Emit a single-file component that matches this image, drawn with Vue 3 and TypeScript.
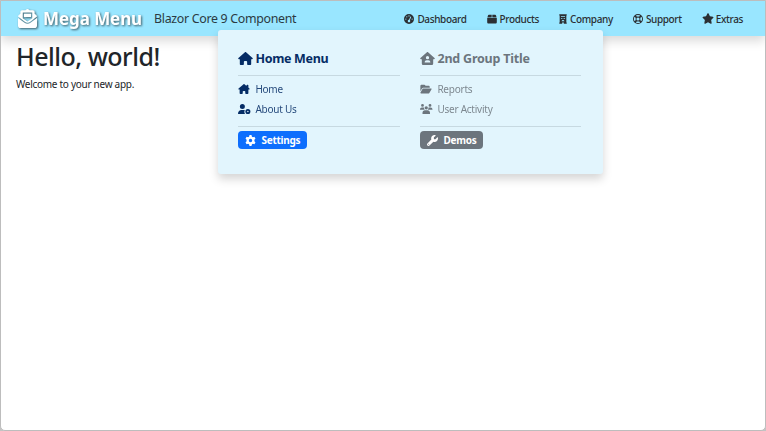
<script setup lang="ts">
interface Icon {
  box: string
  path: string
}
interface NavItem {
  label: string
  icon: string
}
interface Group {
  title: string
  titleIcon: string
  links: NavItem[]
  action: NavItem
  tone: string
}

const icons: Record<string, Icon> = {
  house: {
    box: '0 0 576 512',
    path: 'M575.8 255.5c0 18-15 32.1-32 32.1h-32l.7 160.2c0 2.7-.2 5.4-.5 8.1V472c0 22.1-17.9 40-40 40H392c-22.1 0-40-17.9-40-40V384c0-17.7-14.3-32-32-32H256c-17.7 0-32 14.3-32 32v88c0 22.1-17.9 40-40 40H104c-22.1 0-40-17.9-40-40V287.6H32c-18 0-32-14-32-32.1c0-9 3-17 10-24L266.4 8c7-7 15-8 22-8s15 2 21 7L564.8 231.5c8 7 12 15 11 24z',
  },
  chimney: {
    box: '0 0 576 512',
    path: 'M543.8 287.6c17 0 32-14 32-32.1c1-9-3-17-11-24L512 185V64c0-17.7-14.3-32-32-32H448c-17.7 0-32 14.3-32 32v36.7L309.5 7c-6-5-14-7-21-7s-15 1-22 8L10 231.5c-7 7-10 15-10 24c0 18 14 32.1 32 32.1h32v184.4c0 22.1 17.9 40 40 40h80c22.1 0 40-17.9 40-40V384c0-17.7 14.3-32 32-32h64c17.7 0 32 14.3 32 32v88c0 22.1 17.9 40 40 40h80c22.1 0 40-17.9 40-40V287.6z',
  },
  houseUser: {
    box: '0 0 576 512',
    path: 'M575.8 255.5c0 18-15 32.1-32 32.1h-32v160.4c0 35.3-28.7 64-64 64H128c-35.3 0-64-28.7-64-64V287.6H32c-18 0-32-14-32-32.1c0-9 3-17 10-24L266.4 8c7-7 15-8 22-8s15 2 21 7L564.8 231.5c8 7 12 15 11 24zM352 224a64 64 0 1 0-128 0a64 64 0 1 0 128 0zM256 320c-44.2 0-80 35.8-80 80c0 8.8 7.2 16 16 16H384c8.8 0 16-7.2 16-16c0-44.2-35.8-80-80-80z',
  },
  gauge: {
    box: '0 0 512 512',
    path: 'M0 256a256 256 0 1 1 512 0A256 256 0 1 1 0 256zM288 96a32 32 0 1 0-64 0a32 32 0 1 0 64 0zM256 416c35.3 0 64-28.7 64-64c0-17.4-6.9-33.1-18.1-44.6L366 161.7c5.3-12.1-.2-26.3-12.3-31.6s-26.3 .2-31.6 12.3L257.9 288c-35.3 0-65.9 28.7-65.9 64s28.7 64 64 64zM176 144a32 32 0 1 0-64 0a32 32 0 1 0 64 0zM96 288a32 32 0 1 0 0-64a32 32 0 1 0 0 64zM448 256a32 32 0 1 0-64 0a32 32 0 1 0 64 0z',
  },
  box: {
    box: '0 0 512 512',
    path: 'M20 176L50 75c6-26 20-43 46-43h144v144zM272 32h144c26 0 40 17 46 43l30 101H272zM10 204h492v218c0 35-29 64-64 64H74c-35 0-64-29-64-64z',
  },
  building: {
    box: '40 0 432 512',
    path: 'M56 0h400v64h-20v384h20v64H300v-64h-88v64H56v-64h20V64H56zM144 88v44h224V88zM144 204v44h80v-44zM288 204v44h80v-44zM180 384h152c0-42-34-76-76-76s-76 34-76 76z',
  },
  ring: {
    box: '0 0 512 512',
    path: 'M256 0a256 256 0 1 1 0 512a256 256 0 1 1 0-512zM256 48c-41 0-79 12-112 33l62 62c32-15 68-15 100 0l62-62c-33-21-71-33-112-33zM81 144c-44 69-44 155 0 224l62-62c-15-32-15-68 0-100zM431 144l-62 62c15 32 15 68 0 100l62 62c44-69 44-155 0-224zM144 431c69 44 155 44 224 0l-62-62c-32 15-68 15-100 0zM256 176a80 80 0 1 0 0 160a80 80 0 1 0 0-160z',
  },
  star: {
    box: '0 0 576 512',
    path: 'M316.9 18C311.6 7 300.4 0 288.1 0s-23.4 7-28.8 18L195 150.3 51.4 171.5c-12 1.8-22 10.2-25.7 21.7s-.7 24.2 7.9 32.7L137.8 329 113.2 474.7c-2 12 3 24.2 12.9 31.3s23 8 33.8 2.3l128.3-68.5 128.3 68.5c10.8 5.7 23.9 4.9 33.8-2.3s14.9-19.3 12.9-31.3L438.5 329 542.7 225.9c8.6-8.5 11.7-21.2 7.9-32.7s-13.7-19.9-25.7-21.7L381.2 150.3z',
  },
  userGear: {
    box: '0 0 640 512',
    path: 'M224 0a128 128 0 1 1 0 256a128 128 0 1 1 0-256zM178 304h92c29 0 57 7 82 20c-37 55-36 130 8 188H30c-16 0-30-14-30-30c0-98 80-178 178-178zM506 252a130 130 0 1 1 0 260a130 130 0 1 1 0-260zM506 344a38 38 0 1 0 0 76a38 38 0 1 0 0-76z',
  },
  folder: {
    box: '0 0 576 512',
    path: 'M88.7 223.8L0 375.8V96C0 60.7 28.7 32 64 32H181.5c17 0 33.3 6.7 45.3 18.7l26.5 26.5c12 12 28.3 18.7 45.3 18.7H416c35.3 0 64 28.7 64 64v32H144c-22.8 0-43.8 12.1-55.3 31.8zm27.6 16.1C122.1 230 132.6 224 144 224H544c11.5 0 22 6.1 27.7 16.1s5.7 22.2-.1 32.1l-112 192C453.9 474 443.4 480 432 480H32c-11.5 0-22-6.1-27.7-16.1s-5.7-22.2 .1-32.1l112-192z',
  },
  users: {
    box: '0 0 640 512',
    path: 'M128 0a72 72 0 1 1 0 144a72 72 0 1 1 0-144zM512 0a72 72 0 1 1 0 144a72 72 0 1 1 0-144zM320 110a84 84 0 1 1 0 168a84 84 0 1 1 0-168zM96 174h66c18 0 34 4 48 12c-6 45 12 86 44 112H20c-12 0-20-9-20-20c0-57 43-104 96-104zM478 174h66c53 0 96 47 96 104c0 11-8 20-20 20H386c32-26 50-67 44-112c14-8 30-12 48-12zM250 320h140c68 0 122 60 122 134v58H128v-58c0-74 54-134 122-134z',
  },
  gear: {
    box: '0 0 512 512',
    path: 'M204 12c34-14 70-14 104 0l14 66c18 7 34 16 49 28l64-22c24 29 41 60 51 96l-50 44c3 21 3 43 0 64l50 44c-10 36-27 67-51 96l-64-22c-15 12-31 21-49 28l-14 66c-34 14-70 14-104 0l-14-66c-18-7-34-16-49-28l-64 22c-24-29-41-60-51-96l50-44c-3-21-3-43 0-64l-50-44c10-36 27-67 51-96l64 22c15-12 31-21 49-28zM256 176a80 80 0 1 0 0 160a80 80 0 1 0 0-160z',
  },
  wrench: {
    box: '0 0 512 512',
    path: 'M352 320c88.4 0 160-71.6 160-160c0-15.3-2.2-30.1-6.2-44.2c-3.1-10.8-16.4-13.2-24.3-5.3l-76.8 76.8c-3 3-7.1 4.7-11.3 4.7H336c-8.8 0-16-7.2-16-16V118.6c0-4.2 1.7-8.3 4.7-11.3l76.8-76.8c7.9-7.9 5.4-21.2-5.3-24.3C382.1 2.2 367.3 0 352 0C263.6 0 192 71.6 192 160c0 19.1 3.4 37.5 9.5 54.5L19.9 396.1C7.2 408.8 0 426.1 0 444.1C0 481.6 30.4 512 67.9 512c18 0 35.3-7.2 48-19.9L297.5 310.5c17 6.2 35.4 9.5 54.5 9.5zM80 408a24 24 0 1 1 0 48a24 24 0 1 1 0-48z',
  },
  mail: {
    box: '0 0 512 512',
    path: 'M216 20c24-27 56-27 80 0l16 12h88c26 0 48 22 48 48v48l42 32c14 11 22 26 22 43L318 347c-38 28-86 28-124 0L0 203c0-17 8-32 22-43l42-32V80c0-26 22-48 48-48h88zM128 96v154l104 76c14 10 34 10 48 0l104-76V96zM160 128h192v88H160zM0 243l176 130c48 36 112 36 160 0l176-130v205c0 35-29 64-64 64H64c-35 0-64-29-64-64z',
  },
}

const navItems: NavItem[] = [
  { label: 'Dashboard', icon: 'gauge' },
  { label: 'Products', icon: 'box' },
  { label: 'Company', icon: 'building' },
  { label: 'Support', icon: 'ring' },
  { label: 'Extras', icon: 'star' },
]

const groups: Group[] = [
  {
    title: 'Home Menu',
    titleIcon: 'house',
    links: [
      { label: 'Home', icon: 'chimney' },
      { label: 'About Us', icon: 'userGear' },
    ],
    action: { label: 'Settings', icon: 'gear' },
    tone: 'primary',
  },
  {
    title: '2nd Group Title',
    titleIcon: 'houseUser',
    links: [
      { label: 'Reports', icon: 'folder' },
      { label: 'User Activity', icon: 'users' },
    ],
    action: { label: 'Demos', icon: 'wrench' },
    tone: 'secondary',
  },
]
</script>

<template>
  <div class="window">
    <header class="navbar">
      <div class="brand">
        <svg class="brand-icon" :viewBox="icons.mail.box"><path fill-rule="evenodd" :d="icons.mail.path" /></svg>
        <span class="brand-name">Mega Menu</span>
      </div>
      <span class="subtitle">Blazor Core 9 Component</span>
      <nav class="nav">
        <a v-for="item in navItems" :key="item.label" :class="['nav-item', item.label.toLowerCase()]">
          <svg class="nav-icon" :viewBox="icons[item.icon].box"><path fill-rule="evenodd" :d="icons[item.icon].path" /></svg>
          <span>{{ item.label }}</span>
        </a>
      </nav>
      <div class="mega">
        <section v-for="group in groups" :key="group.title" :class="['group', group.tone]">
          <h2 class="group-title">
            <svg class="title-icon" :viewBox="icons[group.titleIcon].box"><path fill-rule="evenodd" :d="icons[group.titleIcon].path" /></svg>
            <span>{{ group.title }}</span>
          </h2>
          <ul class="links">
            <li v-for="link in group.links" :key="link.label" class="link">
              <span class="link-mark">
                <svg :class="['link-icon', link.icon]" :viewBox="icons[link.icon].box"><path fill-rule="evenodd" :d="icons[link.icon].path" /></svg>
              </span>
              <span class="link-label">{{ link.label }}</span>
            </li>
          </ul>
          <button class="action" type="button">
            <svg class="action-icon" :viewBox="icons[group.action.icon].box"><path fill-rule="evenodd" :d="icons[group.action.icon].path" /></svg>
            <span>{{ group.action.label }}</span>
          </button>
        </section>
      </div>
    </header>
    <main class="content">
      <h1>Hello, world!</h1>
      <p>Welcome to your new app.</p>
    </main>
  </div>
</template>

<style>
body {
  margin: 0;
  background: #c4c4c4;
}
</style>

<style scoped>
.window {
  box-sizing: border-box;
  width: 766px;
  height: 431px;
  overflow: hidden;
  border: 1px solid #bdbdbd;
  border-radius: 0 0 5px 5px;
  background: #fff;
  color: #212529;
  font-family: 'Noto Sans', 'Open Sans', sans-serif;
  font-size: 10px;
}
svg {
  display: block;
  flex: none;
  fill: currentColor;
}
.navbar {
  position: relative;
  box-sizing: border-box;
  display: flex;
  align-items: center;
  height: 35px;
  padding: 0 22px 0 17px;
  background: #99e6ff;
  box-shadow: 0 5px 10px rgba(0, 0, 0, 0.15);
  white-space: nowrap;
}
.brand {
  display: flex;
  align-items: center;
  gap: 6px;
  width: 136px;
  color: #fff;
  filter: drop-shadow(1.3px 1.3px 1px rgba(0, 0, 0, 0.6));
}
.brand-icon {
  width: 19px;
  height: 19px;
}
.brand-name {
  font-size: 17px;
  font-weight: 700;
  line-height: 24px;
  letter-spacing: -0.08px;
}
.subtitle {
  color: #2b3a42;
  font-size: 12.4px;
  letter-spacing: -0.31px;
}
.nav {
  display: flex;
  gap: 20px;
  margin-left: auto;
  color: #2b2f33;
}
.nav-item {
  display: flex;
  align-items: center;
  gap: 3px;
  font-weight: 500;
  letter-spacing: -0.36px;
}
.nav-icon {
  width: 10px;
  height: 10px;
}
.company .nav-icon {
  width: 8px;
}
.extras .nav-icon {
  width: 12px;
  height: 11px;
}
.extras {
  gap: 2px;
}
.mega {
  position: absolute;
  z-index: 2;
  top: 29px;
  left: 217px;
  box-sizing: border-box;
  display: grid;
  grid-template-columns: 162px 161px;
  gap: 20px;
  width: 385px;
  height: 144px;
  padding: 17px 20px 0;
  border-radius: 3px;
  background: #e2f5fd;
  box-shadow: 0 5px 10px rgba(0, 0, 0, 0.17);
}
.primary {
  color: #052c65;
}
.secondary {
  color: #6c757d;
}
.group-title {
  display: flex;
  align-items: center;
  gap: 2.5px;
  height: 22px;
  margin: 0;
  font-size: 12.5px;
  font-weight: 700;
  letter-spacing: -0.22px;
}
.primary .group-title {
  letter-spacing: -0.34px;
}
.title-icon {
  width: 15px;
  height: 13px;
}
.links {
  box-sizing: border-box;
  display: grid;
  align-content: start;
  height: 52px;
  margin: 6px 0 4px;
  padding: 3px 0 0;
  border-top: 1px solid #c7d9e1;
  border-bottom: 1px solid #c7d9e1;
  list-style: none;
}
.link {
  display: flex;
  align-items: center;
  height: 20px;
}
.link-mark {
  width: 17.4px;
}
.link-icon {
  width: 12px;
  height: 10px;
}
.link-icon.userGear,
.link-icon.users {
  width: 12.5px;
}
.link-label {
  letter-spacing: -0.24px;
  opacity: 0.85;
}
.action {
  display: flex;
  align-items: center;
  gap: 5.5px;
  height: 18px;
  padding: 0 7px;
  border: 0;
  border-radius: 4px;
  color: #fff;
  font: 700 10px 'Noto Sans', 'Open Sans', sans-serif;
  letter-spacing: -0.28px;
}
.action-icon {
  width: 11px;
  height: 11px;
}
.primary .action {
  background: #0d6efd;
}
.secondary .action {
  background: #6c757d;
}
.content {
  padding: 4px 15px;
}
h1 {
  margin: 0;
  font-size: 25px;
  font-weight: 500;
  line-height: 32px;
  letter-spacing: -0.5px;
}
p {
  margin: 4px 0 0;
  line-height: 16px;
  letter-spacing: -0.28px;
}
</style>
